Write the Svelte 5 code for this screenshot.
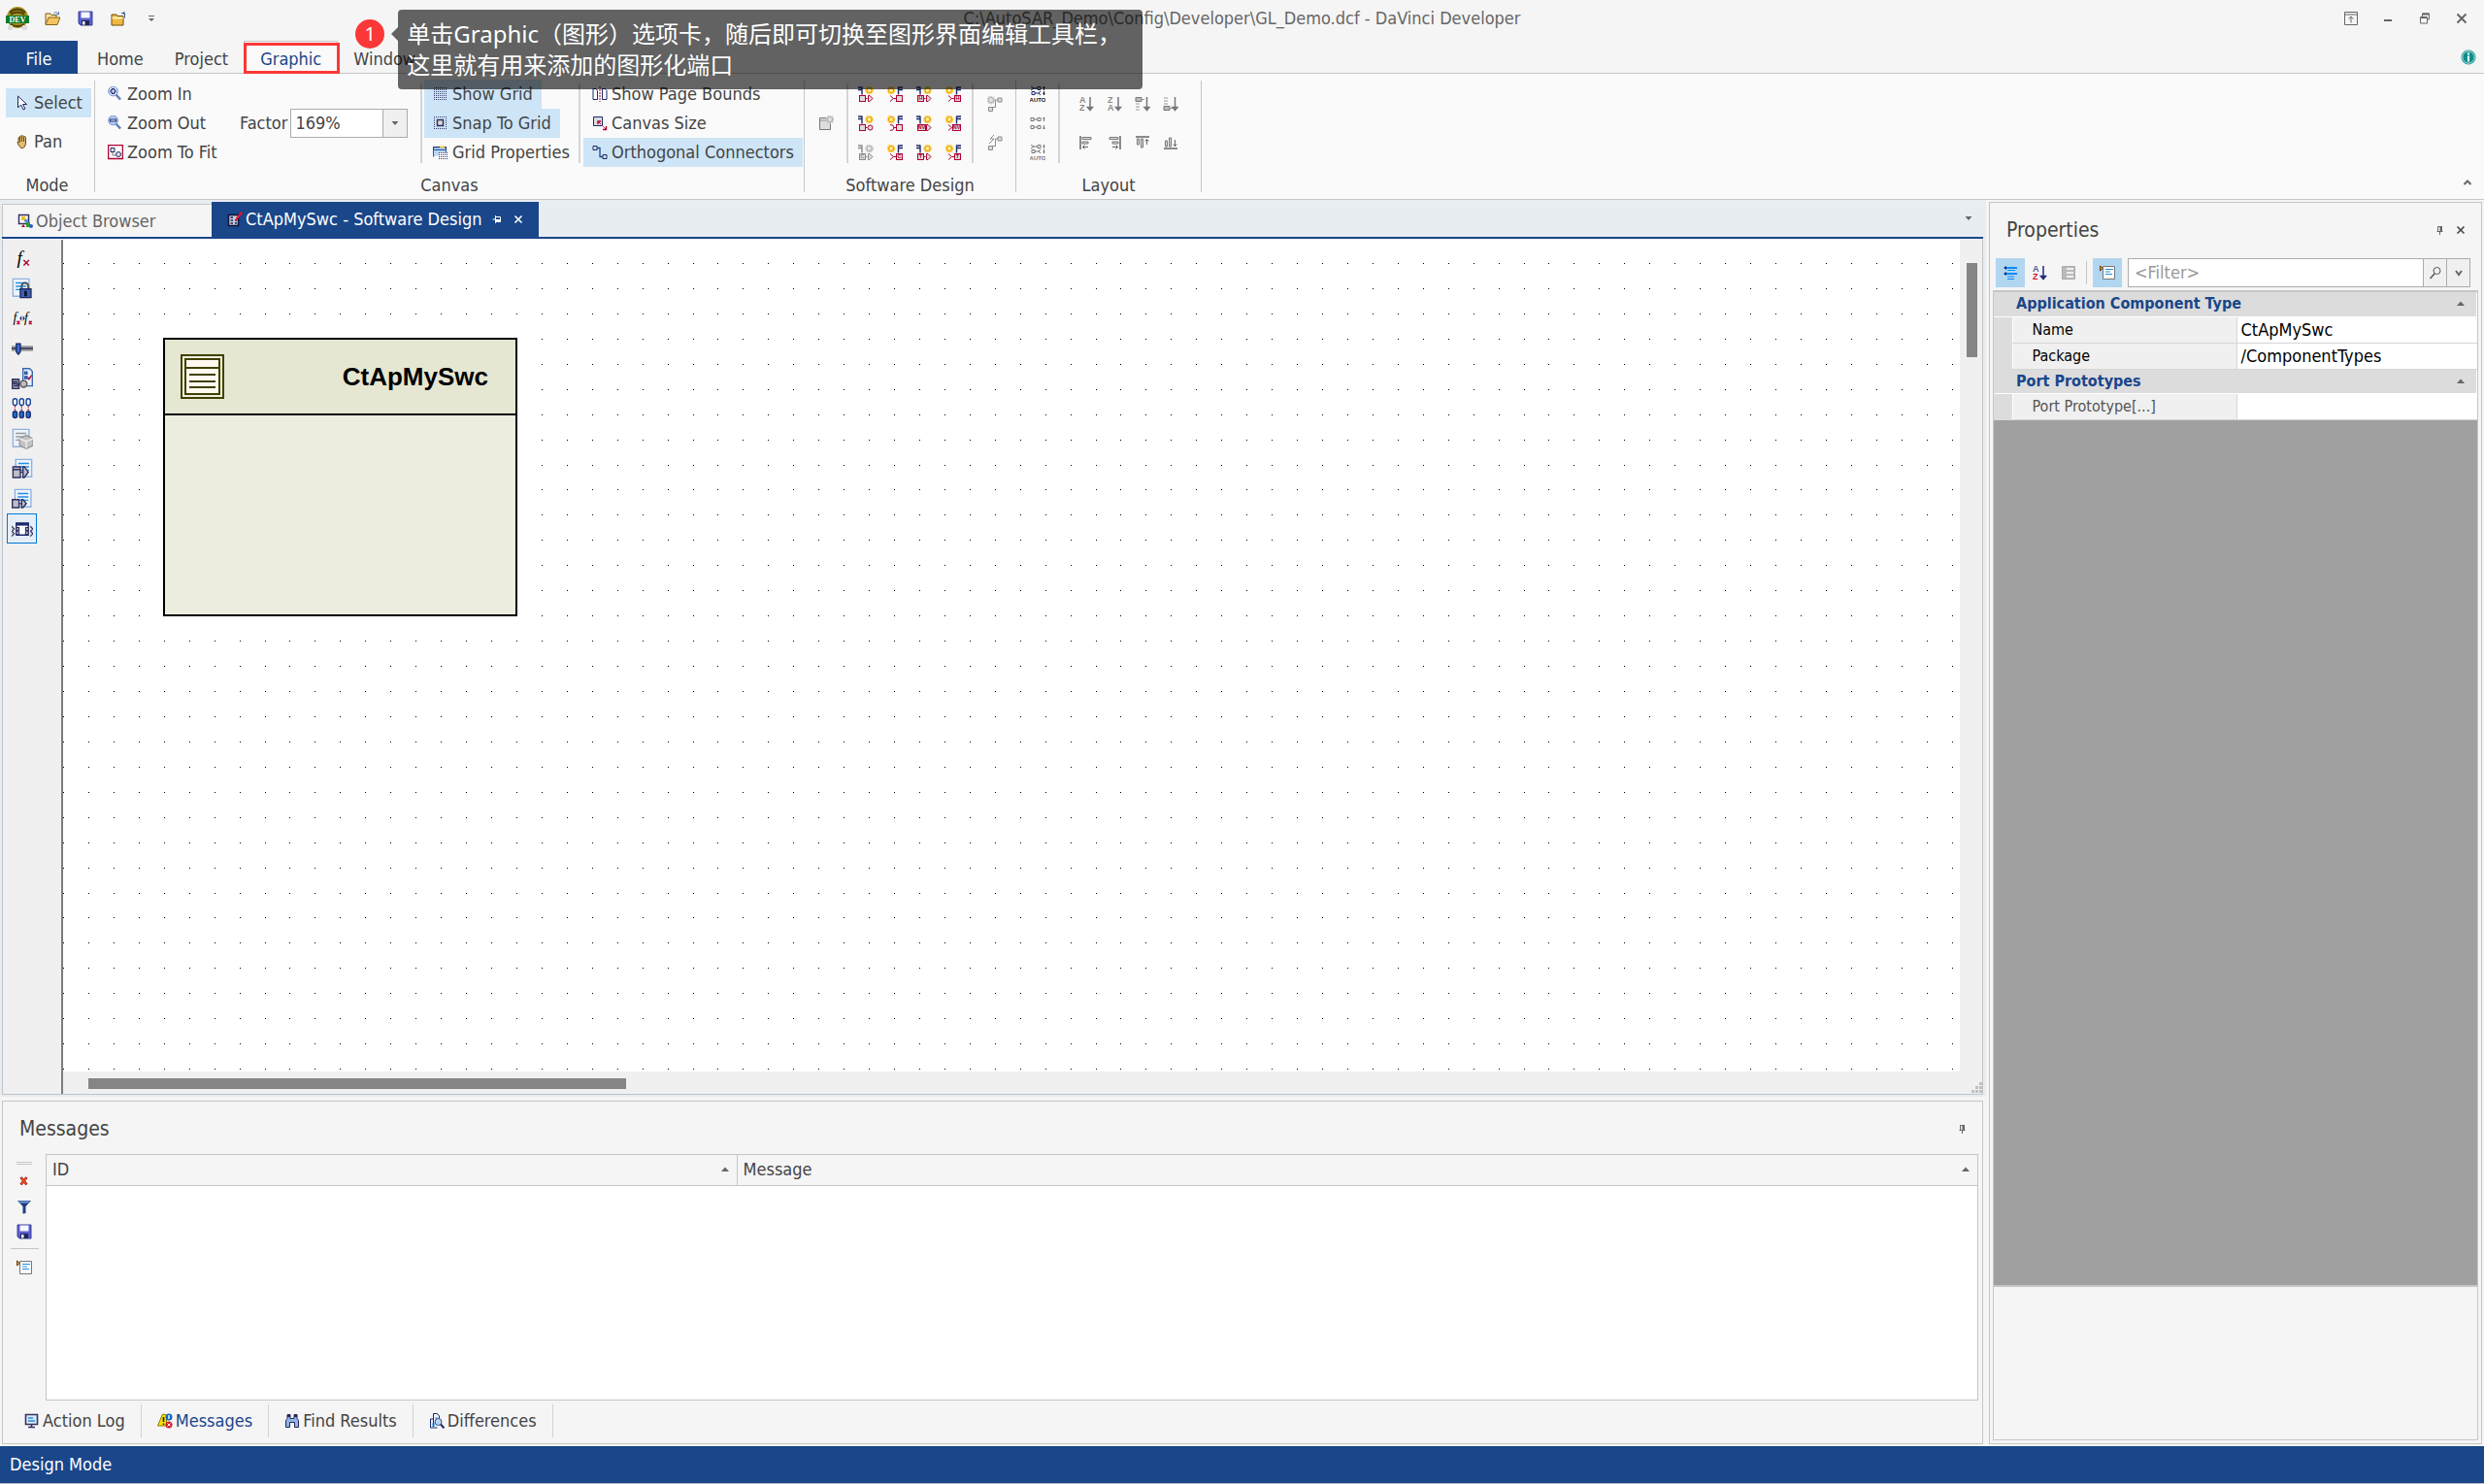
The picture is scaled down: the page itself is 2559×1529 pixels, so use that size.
<!--
  DaVinci Developer main window: ribbon, software design canvas,
  properties grid and message panel.
-->
<script lang="ts">
  const GRID = 25.94;
  const NAVY = '#1b2a6b';
  const RED = '#b0002f';
  const GREY = '#8a8a8a';

  let canvasWidth = $state(0);
  let canvasHeight = $state(0);
  let factor = $state('169%');
  let filter = $state('');

  // one path for all grid points, rounded so each one stays a crisp pixel
  const gridPath = $derived.by(() => {
    let d = '';
    for (let y = 24; y < canvasHeight; y += GRID) {
      for (let x = 0; x < canvasWidth; x += GRID) {
        d += `M${Math.round(x)} ${Math.round(y)}h1v1h-1z`;
      }
    }
    return d;
  });

  function sun(cx: number, cy: number, muted = false) {
    const [ring, fill, core] = muted
      ? ['#c4c4c4', '#b5b5b5', '#e6e6e6']
      : ['#ffd21f', '#f29a00', '#fff2a0'];
    return `<circle cx="${cx}" cy="${cy}" r="3.6" fill="none" stroke="${ring}" stroke-width="1.6" stroke-dasharray="1.6 .7"/>
      <circle cx="${cx}" cy="${cy}" r="2.5" fill="${core}" stroke="${fill}" stroke-width="1.2"/>`;
  }

  function letters(text: string, x: number, color: string) {
    return text
      ? `<text x="${x}" y="14.2" font-size="5.5" font-weight="700" text-anchor="middle" fill="${color}" font-family="Liberation Sans, sans-serif">${text}</text>`
      : '';
  }

  // provide port: flag left, box and arrow (or ball) below
  function provide(text = '', ball = false, muted = false) {
    const flag = muted ? GREY : NAVY;
    const line = muted ? GREY : RED;
    const wide = text === 'NV' ? 8 : 6;
    const head = ball
      ? `<circle cx="12.5" cy="12.5" r="2.5" fill="#ddd" stroke="${line}"/>`
      : `<path d="M10.5 9.5h1.5l3 3-3 3h-1.5z" fill="#ddd" stroke="${line}"/>`;
    return `<path d="M0 1h4M0 3.5h4M4 .5v8" stroke="${flag}" stroke-width="1.4" fill="none"/>
      ${sun(11.5, 4, muted)}
      <rect x="1.5" y="9.5" width="${wide}" height="6" fill="#ddd" stroke="${line}"/><path d="M${wide + 1.5} 12.5h2" stroke="${line}"/>
      ${head}${letters(text, 1.5 + wide / 2, line)}`;
  }

  // require port: sun left, open chevron into the box
  function require(text = '', round = false) {
    const wide = text === 'NV' ? 8 : 6;
    const left = 15.5 - wide;
    const mouth = round ? 'M3 9.5q4 0 4 3t-4 3' : 'M3 9.5l3.5 3-3.5 3';
    return `${sun(4, 4)}
      <path d="M16 1h-4.500M16 3.500h-4.500M11.500 .5v8" stroke="${NAVY}" stroke-width="1.4" fill="none"/>
      <path d="${mouth}M6.500 12.500h${left - 6.5}" stroke="${RED}" fill="none"/>
      <rect x="${left}" y="9.5" width="${wide}" height="6" fill="#ddd" stroke="${RED}"/>${letters(text, left + wide / 2, RED)}`;
  }

  function connect(color: string, auto: boolean, dark: boolean) {
    const link = (y: number) =>
      `<path d="M1 ${y - 1.5}h3v3h-3zM8 ${y - 1.5}h3v3h-3zM4 ${y}h4" fill="none" stroke="${color}"/>`;
    if (!auto) {
      return `${link(4)}${link(12)}<path d="M14.500 6V2M13 3.500l1.500-1.500 1.500 1.500M14.500 10v4M13 12.500l1.500 1.500 1.500-1.500" fill="none" stroke="${color}"/>`;
    }
    const top = dark ? '#111' : color;
    return `<path d="M1 0l3 2-3 2M4 2h4M8 .5h3v3H8zM2 5.500h3v3H2zM5 7h5M11 5l-2 2 2 2" fill="none" stroke="${color}"/>
      <path d="M14.500 4V0M13.500 1.500h2M14.500 5v4M13.500 7.500h2" fill="none" stroke="${top}"/>
      <text x="8" y="15.800" font-size="6" font-weight="700" text-anchor="middle" fill="${top}" font-family="Liberation Sans, sans-serif">AUTO</text>`;
  }

  const az = (a: string, b: string, ca: string, cb: string, arrow: string) =>
    `<g font-family="Liberation Sans, sans-serif" font-size="9" font-weight="700"><text x="1" y="7" fill="${ca}">${a}</text><text x="1" y="15" fill="${cb}">${b}</text></g>
     <path d="M12 1v13M9.500 11.500l2.500 3 2.500-3z" stroke="${arrow}" fill="${arrow}" stroke-width="1.5"/>`;

  const floppy = `<path d="M1 1h14v14H3l-2-2z" fill="#5a5fd0" stroke="#3a3f9c"/><path d="M3.500 1.500h9v6h-9z" fill="#f4f6ff"/><path d="M4 10h8v5H4z" fill="#23264f"/><path d="M5 11h2.500v3.500H5z" fill="#fff"/>`;
  const page = (x: number, w: number, line = '#1f8fe0') =>
    `<path d="M${x} 1h${w}v13h-${w}z" fill="#eef4fd" stroke="#8fb2e0"/><path d="M${x + 2} 4h${w - 4}M${x + 2} 6.500h${w - 4}M${x + 2} 9h${w - 4}" stroke="${line}"/>`;

  const icons: Record<string, string> = {
    open: `<path d="M1 14V3h5l1 1.500h5V7" fill="#fbe6a2" stroke="#7a5a1e"/><path d="M1 14.500L4 7h12l-3 7.500z" fill="#f3c45f" stroke="#8a6420"/><path d="M9 3q3-3 5 .5M14.500 1v3h-3" fill="none" stroke="#5b7fa8"/>`,
    save: floppy,
    project: `<path d="M1 15V4h5l1 1.500h6V15z" fill="#f0b93f" stroke="#6e4c12"/><path d="M1.500 7.500h11" stroke="#fff0b8" stroke-width="2"/><path d="M11 2.500h3.500v5M14.500 1l-2 1.500 2 1.500" fill="none" stroke="#3a5f8f"/>`,
    more: `<path d="M5 5.500h6" stroke="#666"/><path d="M5 8h6l-3 3z" fill="#666"/>`,
    pointer: `<path d="M3.500 1v12l3-3 2.500 5 2-1-2.500-4.500h4z" fill="#fff" stroke="#20265e"/>`,
    hand: `<path d="M4 9V4q1-1.500 1.500 0V2.500q1-1.500 2 0v-.5q1-1 2 .5q1.500-.5 2 1V10q-.5 4-3 4.500H7Q3.500 12.500 3 8z" fill="#e2bd78" stroke="#6b4a14"/><path d="M5.500 3.500v5M7.500 2.500v5.500M9.500 3v5" stroke="#6b4a14"/>`,
    zoomIn: `<path d="M8.500 8.500l4.500 5" stroke="#5d7fb5" stroke-width="2.500"/><circle cx="5.500" cy="5" r="4.800" fill="#dfe9fb" stroke="#6d8fd0"/><path d="M5.500 2v6M2.500 5h6" stroke="${NAVY}" stroke-width="3"/><path d="M5.500 3v4M3.500 5h4" stroke="#fff"/>`,
    zoomOut: `<path d="M8.500 8.500l4.500 5" stroke="#5d7fb5" stroke-width="2.500"/><circle cx="5.500" cy="5" r="4.800" fill="#b9ccf2" stroke="#6d8fd0"/><path d="M2 5h7" stroke="${NAVY}" stroke-width="3"/><path d="M3 5h5" stroke="#fff"/>`,
    zoomFit: `<path d="M.5.5h15v14H.5z" fill="#fff" stroke="${RED}" stroke-width="1.500"/><path d="M3 3.500h4v4H3z" fill="#ddd" stroke="${NAVY}"/><circle cx="11" cy="10" r="2.500" fill="#ddd" stroke="${NAVY}"/><path d="M5 8v3h3" stroke="#777" fill="none"/>`,
    grid: `<path d="M1 1.500h14M1 3.500h14M1 5.500h14M1 7.500h14M1 9.500h14M1 11.500h14M1 13.500h14" stroke="#3a3a68" stroke-dasharray="1 1"/>`,
    snap: `<path d="M1 1.500h14M1 3.500h14M1 5.500h14M1 7.500h14M1 9.500h14M1 11.500h14M1 13.500h14" stroke="#3a3a68" stroke-dasharray="1 1"/><path d="M3 3h9v9H3z" fill="#cde5f7"/><path d="M4.500 4.500h6v6h-6z" fill="#d8d8d8" stroke="#2b2b60" stroke-width="1.400"/>`,
    gridProps: `<path d="M.5 12V2.500h13v3" fill="#9cc4ee" stroke="${NAVY}"/><path d="M7 1.500h5v2H7z" fill="#f4c542"/><path d="M.5 12.500v-7h13v3" fill="#b8d8f5" stroke="#2a5aa8"/><path d="M6 8h10v7H6z" fill="#fff"/><path d="M6 8.500h10M6 10.500h10M6 12.500h10M6 14.500h10" stroke="#222a66" stroke-dasharray="1 1"/>`,
    pageBounds: `<path d="M1 2.500h3l1.500 2v9H1zM10.500 2.500h3l1.500 2v9h-4.500z" fill="#fff" stroke="${NAVY}"/><path d="M8 0v16" stroke="${RED}" stroke-dasharray="2 1"/>`,
    canvasSize: `<path d="M1.500 1.500h9v9h-9z" fill="#ddd" stroke="${NAVY}"/><path d="M6 6l8 8" stroke="${RED}" stroke-dasharray="4 2 2 1"/><path d="M6 9V6h3M14.500 11v3.500H11" fill="none" stroke="${RED}" stroke-width="1.400"/>`,
    ortho: `<path d="M1 1.500h4v4H1zM11 10.500h4v4h-4z" fill="#ddd" stroke="${NAVY}"/><path d="M5 3.500h3v9h3" fill="none" stroke="#1a468a" stroke-width="1.300"/>`,
    component: `<path d="M1.500 2.500h11v12h-11z" fill="#ddd" stroke="#777"/><path d="M2 5h9" stroke="#999"/>${sun(12, 4, true)}`,
    wire: `<path d="M1.500 11.500h4v4h-4zM11 2h4v4h-4z" fill="#ddd" stroke="${GREY}"/><path d="M5.500 11.500h3V4H11" fill="none" stroke="${GREY}"/>${sun(4, 4, true)}`,
    wireAuto: `<path d="M1.500 11.500h4v4h-4zM11 2h4v4h-4z" fill="#ddd" stroke="${GREY}"/><path d="M5.500 11.500h3V4H11M7 0L3 4h4L2 9" fill="none" stroke="${GREY}"/>`,
    linkBest: connect(NAVY, true, true),
    link: connect('#777', false, false),
    linkAll: connect('#777', true, false),
    sortAz: az('A', 'Z', '#888', '#888', '#777'),
    sortZa: az('Z', 'A', '#888', '#888', '#777'),
    sortTop: `<path d="M1 1.500h6v4H1z" fill="#bbb" stroke="#777"/><path d="M7 3.500h3M1 8h4M1 11h4M1 14h4" stroke="#999"/><path d="M12.500 1v13M10 11.500l2.500 3 2.500-3z" stroke="#777" fill="#777" stroke-width="1.500"/>`,
    sortBottom: `<path d="M1 10.500h6v4H1z" fill="#bbb" stroke="#777"/><path d="M7 12.500h3M1 2h4M1 5h4M1 8h4" stroke="#999"/><path d="M12.500 1v13M10 11.500l2.500 3 2.500-3z" stroke="#777" fill="#777" stroke-width="1.500"/>`,
    alignLeft: `<path d="M2 1v14" stroke="#666" stroke-width="1.500"/><path d="M4 2.500h9v2H4zM4 7h6v2H4z" fill="#ddd" stroke="#777"/><path d="M10 12.500H4.500M6.500 10.500l-2 2 2 2" fill="none" stroke="#666"/>`,
    alignRight: `<path d="M14 1v14" stroke="#666" stroke-width="1.500"/><path d="M3 2.500h9v2H3zM6 7h6v2H6z" fill="#ddd" stroke="#777"/><path d="M6 12.500h5.500M9.500 10.500l2 2-2 2" fill="none" stroke="#666"/>`,
    alignTop: `<path d="M1 2h14" stroke="#666" stroke-width="1.500"/><path d="M2.500 4h2v6h-2zM6.500 4h2v9h-2z" fill="#ddd" stroke="#777"/><path d="M12.500 10V4.500M10.500 6.500l2-2 2 2" fill="none" stroke="#666"/>`,
    alignBottom: `<path d="M1 14h14" stroke="#666" stroke-width="1.500"/><path d="M2.500 6h2v6h-2zM6.500 3h2v9h-2z" fill="#ddd" stroke="#777"/><path d="M12.500 5v6.500M10.500 9.500l2 2 2-2" fill="none" stroke="#666"/>`,
    info: `<circle cx="8" cy="8" r="7" fill="#0b8f8c" stroke="#0b8f8c"/><circle cx="8" cy="8" r="6.200" fill="none" stroke="#bfe5e3"/><path d="M8 3.500v2M8 6.500v6" stroke="#fff" stroke-width="2"/>`,
    fullUp: `<path d="M1.500 1.500h13v13h-13zM1.500 4h13M8 12.500V6M5.500 8.500L8 6l2.500 2.500" fill="none" stroke="#666"/>`,
    minimize: `<path d="M4 10h8" stroke="#666" stroke-width="2"/>`,
    restore: `<path d="M3.500 7h7v6h-7zM5.500 7V3h7v6h-2" fill="none" stroke="#666"/><path d="M3.500 7h7M5.500 3.500h7" stroke="#666" stroke-width="2"/>`,
    close: `<path d="M3.500 3.500l9 9M12.500 3.500l-9 9" stroke="#666" stroke-width="2"/>`,
    closeThin: `<path d="M4.500 4.500l7 7M11.500 4.500l-7 7" stroke="currentColor" stroke-width="1.600"/>`,
    chevronUp: `<path d="M4.500 10L8 6.500l3.500 3.500" fill="none" stroke="#666" stroke-width="2"/>`,
    chevronDown: `<path d="M5 6l3 4 3-4" fill="none" stroke="#666" stroke-width="2"/>`,
    caret: `<path d="M4.500 6h7L8 10z" fill="#666"/>`,
    sorted: `<path d="M4 10h8L8 5.500z" fill="#666"/>`,
    pin: `<path d="M5.500 4.500h4v5h-4zM4.500 9.500h6M7.500 10v3" fill="none" stroke="#666"/><path d="M7.500 4H10v5.500H7.500z" fill="#666"/>`,
    pinSide: `<path d="M6.500 5.500h5v5h-5zM6.500 4v8M3.500 8h3" fill="none" stroke="#fff"/><path d="M7 8h4.500v2.500H7z" fill="#fff"/>`,
    browser: `<path d="M1.500 1.500h10v9h-10z" fill="#fff" stroke="#33335e" stroke-width="1.500"/><path d="M4 3h4v4H4z" fill="#f0c020"/><circle cx="9" cy="7.500" r="2" fill="#5b8fe0"/><path d="M9 9h4v5H9z" fill="#2f9a3c"/><path d="M4 14l2-3 2 3z" fill="${RED}"/><circle cx="14" cy="13" r="2" fill="#2f5fc0"/>`,
    design: `<path d="M1.500 3.500h10v11h-10z" fill="#c8c8d8" stroke="#0b1238" stroke-width="1.500"/><path d="M3.500 6h2.500M3.500 9h2.500M3.500 12h2.500M8 9h2M8 12h2" stroke="#16205a" stroke-width="1.400"/><path d="M8 10l1-3 5-7 2 1.500-5.500 7z" fill="#e0152e"/>`,
    fx: `<text x="4" y="12" font-size="14" font-style="italic" fill="#000" font-family="Liberation Serif, serif">f</text><path d="M9 9.500l4 4M13 9.500l-4 4" stroke="${RED}"/>`,
    lockPage: `${page(1, 12)}<path d="M7.500 9V6.500a2.500 2.500 0 0 1 5 0V9" fill="none" stroke="#555" stroke-width="1.500"/><path d="M6.500 8.500h8v6.500h-8z" fill="#3d62a8" stroke="${NAVY}"/><path d="M10.500 10v4" stroke="#0a1234" stroke-width="2"/>`,
    fxfx: `<g font-family="Liberation Serif, serif" font-size="10" font-style="italic" fill="#000"><text x="1" y="11">f</text><text x="9.500" y="11">f</text></g><path d="M4 10l2 2.500M6 10l-2 2.500M13 10l2 2.500M15 10l-2 2.500" stroke="${RED}"/><path d="M7.500 6v4L6 8zM8.500 6v4L10 8z" fill="${NAVY}"/>`,
    slider: `<path d="M0 8h16" stroke="#999" stroke-width="4"/><path d="M0 8h16" stroke="#2b2b55"/><path d="M3.500 4.500h3v6L5 12.500l-1.500-2z" fill="#3a6fd0" stroke="${NAVY}"/>`,
    service: `<path d="M8.500.5h5l2 2v11h-7z" fill="#e8f0fc" stroke="#3b66b0"/><path d="M10 3h1.500v1.500H10zM10 6.500h1.500V8H10z" stroke="#1f4f9f" fill="none"/><path d="M12 7l1 1.500 2-3" fill="none" stroke="${RED}"/><path d="M.5 8.500h5v7h-5z" fill="#aaa" stroke="#2f2f60"/><path d="M5.500 12h2M4.500 10.500h-3V12h3v1.500h-3" fill="none" stroke="#2f2f60"/><circle cx="9" cy="12" r="2.500" fill="#bbb" stroke="#555"/>`,
    mapping: [2.5, 7.5, 12.5].map((x) => `<rect x="${x - 1.5}" y="0.500" width="3" height="5" rx="1.500" fill="#fff" stroke="#0f3f9a"/><path d="M${x} 6v4" stroke="${RED}" stroke-dasharray="1 1"/><rect x="${x - 1.5}" y="10" width="3" height="5" rx="1.500" fill="#1f6fd0" stroke="${NAVY}"/>`).join(''),
    cube: `${page(1, 12, '#999')}<path d="M6 8l5-2.500L16 8v5l-5 2.500L6 13z" fill="#c4c4c4" stroke="#999"/><path d="M6 8l5 2 5-2M11 10v5" fill="none" stroke="#eee"/>`,
    dataOut: `${page(3, 12)}<path d="M1 6.500h5.500v8H1z" fill="#bdbdc6" stroke="#2f2f60"/><path d="M1 8.500h5.500M6.500 10.500H9M8.500 6.500h1l3 4-3 4h-1z" fill="#bdbdc6" stroke="#2f2f60"/>`,
    dataIn: `${page(2.5, 12)}<path d="M.5 8.500h5v6h-5zM5.500 11.500H7M7.500 8.500H8.500l2.500 3-2.500 3H7.500z" fill="#bdbdc6" stroke="#2f2f60"/>`,
    portView: `<path d="M3.500 3.500h9v9h-9z" fill="#fff" stroke="${NAVY}"/><path d="M3 4.500h10" stroke="${NAVY}" stroke-width="2"/><path d="M3.500 7h2v2h-2zM3.500 10h2v2h-2zM10.500 7h2v2h-2zM10.500 10h2v2h-2zM0 6l2 2-2 2M0 9.500l2 2-2 2M14 6l2 2-2 2M14 9.500l2 2-2 2" fill="#ccc" stroke="#2f2f60" stroke-width=".8"/>`,
    clear: `<path d="M4.500 4l6 7.500M10.500 4l-6 7.500" stroke="#a02410" stroke-width="2.800"/><path d="M5 4.500l5 6.500M10 4.500L5 11" stroke="#ff5a28" stroke-width="1.200"/>`,
    funnel: `<path d="M1 2h14L9.500 8v7l-3 .500V8z" fill="#1f3f80"/><path d="M2 2.500h12l-2 2H4z" fill="#6f9ad0"/>`,
    note: `<path d="M3.500 1.500h12v13h-12z" fill="#fff" stroke="#777"/><path d="M6 4.500h8M6 7h5M6 9.500h7" stroke="#1f8fe0"/><path d="M.5 1l3 2.500-3 2.500z" fill="#e8a040" stroke="#6b4210"/>`,
    category: `<path d="M3 3h12M3 9h12" stroke="#0a8cff" stroke-width="2"/><path d="M5 5.500h8M5 12h7M5 14.500h7" stroke="#0a8cff"/><path d="M4 1v4L1 3zM4 7v4L1 9z" fill="#0a2b6b"/>`,
    sortProps: az('A', 'Z', '#55588f', '#d0152e', '#1f2a7a'),
    list: `<path d="M1.500 1.500h13v13h-13z" fill="#bbb" stroke="#aaa"/><path d="M6 4h7M6 8h7M6 12h7" stroke="#eee" stroke-width="2"/>`,
    search: `<circle cx="9.500" cy="6" r="3.500" fill="none" stroke="#555"/><path d="M7 9l-4.500 5" stroke="#555" stroke-width="1.500"/>`,
    monitor: `<path d="M1.500 1.500h12v10h-12z" fill="#dce8fa" stroke="#33335e" stroke-width="1.600"/><path d="M4 5h5M4 8h7" stroke="#1f8fe0" stroke-width="1.400"/><path d="M7.500 12v2M4 14.500h7" stroke="#33335e" stroke-width="1.600"/>`,
    alerts: `<path d="M5.500 1L.5 13h9V2z" fill="#ffe000" stroke="#8a7a00"/><path d="M6.500 4v5M6.500 10.500v1.500" stroke="#222" stroke-width="1.600"/><circle cx="12" cy="4" r="3.500" fill="#1468c0"/><path d="M12 2v4" stroke="#fff" stroke-width="1.400"/><circle cx="12" cy="12" r="3.500" fill="#d0202c"/><path d="M10.500 10.500l3 3M13.500 10.500l-3 3" stroke="#fff"/>`,
    binoculars: `<path d="M3 1.500h3v4h4v-4h3v4l1.500 2v7h-4v-5h-5v5h-4v-7L3 5.500z" fill="#8fb4ea" stroke="#25255a"/><path d="M3 3h3M10 3h3" stroke="#25255a" stroke-width="2"/>`,
    differences: `<path d="M4.500 14V.5h4l2 2.500v4M1.500 6h3M1.500 6v9h7" fill="#eef3fc" stroke="${NAVY}"/><path d="M3 11h3M3 13h3M6 5h3" stroke="#1f8fe0"/><circle cx="9.500" cy="9" r="3.500" fill="#bcd4f4" stroke="#33508f"/><path d="M12 11.500l3.500 4" stroke="${NAVY}" stroke-width="2"/>`,
    provide1: provide(),
    require1: require(),
    provideH: provide('H'),
    requireH: require('H'),
    provideBall: provide('', true),
    requireRound: require('', true),
    provideNv: provide('NV'),
    requireNv: require('NV'),
    provideC: provide('C', false, true),
    requireC: require('C'),
    provideT: provide('T'),
    requireT: require('T')
  };

  const portRows = [
    ['provide1', 'require1', 'provideH', 'requireH'],
    ['provideBall', 'requireRound', 'provideNv', 'requireNv'],
    ['provideC', 'requireC', 'provideT', 'requireT']
  ];
  const layoutRows = [
    ['sortAz', 'sortZa', 'sortTop', 'sortBottom'],
    ['alignLeft', 'alignRight', 'alignTop', 'alignBottom']
  ];
  const sideTools = ['fx', 'lockPage', 'fxfx', 'slider', 'service', 'mapping', 'cube', 'dataOut', 'dataIn', 'portView'];
  const bottomTabs = [
    { icon: 'monitor', label: 'Action Log' },
    { icon: 'alerts', label: 'Messages' },
    { icon: 'binoculars', label: 'Find Results' },
    { icon: 'differences', label: 'Differences' }
  ];
  const categories = [
    { title: 'Application Component Type', rows: [['Name', 'CtApMySwc'], ['Package', '/ComponentTypes']] },
    { title: 'Port Prototypes', rows: [['Port Prototype[...]', '']] }
  ];
</script>

{#snippet icon(name: string)}
  <svg class="icon" viewBox="0 0 16 16" fill="none" aria-hidden="true">{@html icons[name]}</svg>
{/snippet}

{#snippet command(name: string, label: string, on = false)}
  <button class="command" class:on>{@render icon(name)}{label}</button>
{/snippet}

{#snippet tool(name: string, on = false)}
  <button class="tool" class:on aria-label={name}>{@render icon(name)}</button>
{/snippet}

<div class="app">
  <header class="titlebar">
    <div class="quick">
      <svg class="logo" viewBox="0 0 24 24" aria-hidden="true">
        <circle cx="12" cy="11" r="11" fill="#a8901c" />
        <path d="M4 6q8-7 16 0M5 8q7-5 14 0M5 18q7 4 14 0" fill="none" stroke="#4b4008" stroke-width="2" />
        <path d="M2 19h5v5H2zM17 19h5v5h-5z" fill="#ddd" />
        <path d="M0 9h24v8H0z" fill="#0c7a2a" />
        <text x="12" y="16" text-anchor="middle" font-size="8" font-weight="700" font-family="Liberation Serif, serif" fill="#fff">DEV</text>
      </svg>
      <button aria-label="Open">{@render icon('open')}</button>
      <button aria-label="Save">{@render icon('save')}</button>
      <button aria-label="Close project">{@render icon('project')}</button>
      <button aria-label="Customize">{@render icon('more')}</button>
    </div>
    <h1>C:\AutoSAR_Demo\Config\Developer\GL_Demo.dcf - DaVinci Developer</h1>
    <div class="window-buttons">
      <button aria-label="Full screen">{@render icon('fullUp')}</button>
      <button aria-label="Minimize">{@render icon('minimize')}</button>
      <button aria-label="Restore">{@render icon('restore')}</button>
      <button aria-label="Close">{@render icon('close')}</button>
    </div>
  </header>

  <nav class="ribbon-tabs">
    <button class="file">File</button>
    <button>Home</button>
    <button>Project</button>
    <button class="active">Graphic<span class="highlight"></span></button>
    <button class="last">
      Window
      <span class="callout">
        <span class="step">1</span>
        <span class="tip">单击Graphic（图形）选项卡，随后即可切换至图形界面编辑工具栏，<br />这里就有用来添加的图形化端口</span>
      </span>
    </button>
    <button class="about" aria-label="About">{@render icon('info')}</button>
  </nav>

  <section class="ribbon">
    <div class="group">
      <div class="content mode">
        {@render command('pointer', 'Select', true)}
        {@render command('hand', 'Pan')}
      </div>
      <span class="caption">Mode</span>
    </div>
    <div class="group">
      <div class="content canvas-tools">
        <div class="stack">
          {@render command('zoomIn', 'Zoom In')}
          {@render command('zoomOut', 'Zoom Out')}
          {@render command('zoomFit', 'Zoom To Fit')}
        </div>
        <label class="factor">
          Factor
          <span class="combo">
            <select bind:value={factor}>
              <option>100%</option>
              <option>169%</option>
              <option>200%</option>
            </select>
            <span class="combo-arrow">{@render icon('caret')}</span>
          </span>
        </label>
        <i class="bar"></i>
        <div class="stack grid-tools">
          {@render command('grid', 'Show Grid', true)}
          {@render command('snap', 'Snap To Grid', true)}
          {@render command('gridProps', 'Grid Properties')}
        </div>
        <i class="bar"></i>
        <div class="stack page-tools">
          {@render command('pageBounds', 'Show Page Bounds')}
          {@render command('canvasSize', 'Canvas Size')}
          {@render command('ortho', 'Orthogonal Connectors', true)}
        </div>
      </div>
      <span class="caption">Canvas</span>
    </div>
    <div class="group">
      <div class="content design-tools">
        <div class="single">{@render tool('component')}</div>
        <i class="bar"></i>
        <div class="ports">
          {#each portRows.flat() as name}
            {@render tool(name)}
          {/each}
        </div>
        <i class="bar"></i>
        <div class="pair">
          {@render tool('wire')}
          {@render tool('wireAuto')}
        </div>
      </div>
      <span class="caption">Software Design</span>
    </div>
    <div class="group">
      <div class="content layout-tools">
        <div class="links">
          {@render tool('linkBest')}
          {@render tool('link')}
          {@render tool('linkAll')}
        </div>
        <i class="bar"></i>
        <div class="arrange">
          {#each layoutRows.flat() as name}
            {@render tool(name)}
          {/each}
        </div>
      </div>
      <span class="caption">Layout</span>
    </div>
    <button class="collapse" aria-label="Collapse ribbon">{@render icon('chevronUp')}</button>
  </section>

  <main>
    <div class="left">
      <section class="documents">
        <div class="doc-tabs">
          <button class="doc">{@render icon('browser')}Object Browser</button>
          <button class="doc current">
            {@render icon('design')}CtApMySwc - Software Design
            <span class="tab-marks">{@render icon('pinSide')}{@render icon('closeThin')}</span>
          </button>
          <button class="tool tab-menu" aria-label="Open documents">{@render icon('caret')}</button>
        </div>
        <div class="editor">
          <div class="side-tools">
            {#each sideTools as name}
              <button class:on={name === 'portView'} aria-label={name}>{@render icon(name)}</button>
            {/each}
          </div>
          <div class="surface" bind:clientWidth={canvasWidth} bind:clientHeight={canvasHeight}>
            <svg class="dots" aria-hidden="true"><path d={gridPath} /></svg>
            <article class="node">
              <header>
                <svg viewBox="0 0 45 46" aria-hidden="true">
                  <path d="M1 1h43v44H1z" fill="#f0efe0" stroke="#404000" stroke-width="2" />
                  <path d="M5 5h35v36H5zM5 14h35" fill="#fff8f0" stroke="#404000" stroke-width="2" />
                  <path d="M9 21h27M9 28h27M9 34h27" stroke="#404000" stroke-width="2" />
                </svg>
                <h2>CtApMySwc</h2>
              </header>
            </article>
          </div>
          <div class="scroll-y"><i></i></div>
          <div class="scroll-x"><i></i></div>
          <div class="corner">
            <svg viewBox="0 0 12 12" aria-hidden="true"><path d="M9 0h3v3H9zM5 4h3v3H5zM9 4h3v3H9zM1 8h3v3H1zM5 8h3v3H5zM9 8h3v3H9z" fill="#bfbfbf" /></svg>
          </div>
        </div>
      </section>

      <section class="panel messages">
        <div class="panel-title">
          <h2>Messages</h2>
          <button class="tool" aria-label="Pin messages">{@render icon('pin')}</button>
        </div>
        <div class="log">
          <div class="log-tools">
            <i class="grip"></i>
            {@render tool('clear')}
            {@render tool('funnel')}
            {@render tool('save')}
            <i class="rule"></i>
            {@render tool('note')}
          </div>
          <div class="log-table">
            <table>
              <thead>
                <tr>
                  <th class="id"><span>ID{@render icon('sorted')}</span></th>
                  <th><span>Message{@render icon('sorted')}</span></th>
                </tr>
              </thead>
              <tbody></tbody>
            </table>
          </div>
        </div>
        <div class="bottom-tabs">
          {#each bottomTabs as tab}
            <button class:current={tab.label === 'Messages'}>{@render icon(tab.icon)}{tab.label}</button>
          {/each}
        </div>
      </section>
    </div>

    <aside class="panel properties">
      <div class="panel-title">
        <h2>Properties</h2>
        <button class="tool" aria-label="Pin properties">{@render icon('pin')}</button>
        <button class="tool" aria-label="Close properties">{@render icon('closeThin')}</button>
      </div>
      <div class="prop-tools">
        {@render tool('category', true)}
        {@render tool('sortProps')}
        {@render tool('list')}
        <i class="rule"></i>
        {@render tool('note', true)}
        <div class="filter">
          <input type="text" placeholder="<Filter>" aria-label="Filter" bind:value={filter} />
          <button aria-label="Search">{@render icon('search')}</button>
          <button aria-label="Filter history">{@render icon('chevronDown')}</button>
        </div>
      </div>
      <div class="prop-grid">
        <table>
          <colgroup>
            <col class="col-gutter" />
            <col class="col-name" />
            <col />
          </colgroup>
          <tbody>
            {#each categories as category}
              <tr class="category">
                <th colspan="3"><span>{category.title}{@render icon('sorted')}</span></th>
              </tr>
              {#each category.rows as [name, value]}
                <tr class:empty={!value}>
                  <td class="gutter"></td>
                  <th>{name}</th>
                  <td>{value}</td>
                </tr>
              {/each}
            {/each}
          </tbody>
        </table>
      </div>
      <div class="description"></div>
    </aside>
  </main>

  <footer>Design Mode</footer>
</div>

<style>
  :global(body) {
    background: #f5f5f5;
  }
  .app {
    --blue: #1a468a;
    --line: #c6c6c6;
    --on: #cde5f7;
    display: flex;
    flex-direction: column;
    min-height: 100vh;
    color: #444;
    font: 18px/24px 'DejaVu Sans Condensed', 'Noto Sans', sans-serif;
    overflow: hidden;
  }
  .app * {
    box-sizing: border-box;
  }
  button {
    display: flex;
    align-items: center;
    justify-content: center;
    padding: 0;
    border: none;
    background: none;
    color: inherit;
    font: inherit;
    white-space: nowrap;
  }
  h1,
  h2 {
    margin: 0;
    font-weight: 400;
  }
  .icon {
    display: block;
    flex: none;
    width: 16px;
    height: 16px;
  }

  /* title bar */
  .titlebar {
    display: grid;
    grid-template-columns: 1fr auto 1fr;
    align-items: center;
    height: 38px;
    margin-bottom: 4px;
  }
  .titlebar h1 {
    font-size: 18px;
    color: #666;
  }
  .quick {
    display: flex;
    align-items: center;
    gap: 18px;
    padding-left: 6px;
  }
  .quick .logo {
    width: 24px;
    height: 24px;
    margin-right: -2px;
  }
  .window-buttons {
    display: flex;
    justify-content: flex-end;
    gap: 22px;
    padding-right: 15px;
  }

  /* ribbon tabs */
  .ribbon-tabs {
    display: flex;
    height: 34px;
    border-bottom: 1px solid var(--line);
  }
  .ribbon-tabs button {
    position: relative;
    height: 34px;
    padding: 3px 16px 0;
  }
  .ribbon-tabs .file {
    width: 80px;
    margin-right: 4px;
    background: var(--blue);
    color: #fff;
  }
  .ribbon-tabs .active {
    border: 1px solid var(--line);
    border-bottom: none;
    padding: 2px 16px 0;
    background: #fafafa;
    color: var(--blue);
  }
  .highlight {
    position: absolute;
    inset: 1px -3px 0 -1px;
    border: 3px solid #fc3737;
  }
  .ribbon-tabs .about {
    margin-left: auto;
    padding: 0 8px;
  }
  .callout {
    position: absolute;
    left: 18px;
    top: -32px;
    z-index: 2;
    display: flex;
    align-items: flex-start;
    gap: 14px;
    text-align: left;
  }
  .step {
    width: 30px;
    height: 30px;
    margin-top: 10px;
    border-radius: 50%;
    background: #fc3737;
    color: #fff;
    font: 20px/30px 'Noto Sans', sans-serif;
    text-align: center;
  }
  .tip {
    position: relative;
    padding: 9px 22px 9px 9px;
    border-radius: 4px;
    background: rgb(0 0 0 / 60%);
    color: #fff;
    font: 24px/32px 'Noto Sans', 'Noto Sans CJK SC', sans-serif;
  }
  .tip::before {
    content: '';
    position: absolute;
    right: 100%;
    top: 18px;
    border: 7px solid transparent;
    border-left-width: 0;
    border-right-color: rgb(0 0 0 / 60%);
  }

  /* ribbon */
  .ribbon {
    display: flex;
    height: 130px;
    border-bottom: 1px solid var(--line);
    background: #fafafa;
  }
  .group {
    display: flex;
    flex-direction: column;
    align-items: center;
    margin: 7px 0;
    border-right: 1px solid var(--line);
  }
  .content {
    display: flex;
    flex: none;
    height: 90px;
    margin-top: -1px;
  }
  .caption {
    margin-top: 7px;
  }
  .command {
    height: 30px;
    gap: 4px;
    padding: 0 9px;
  }
  .command.on {
    background: var(--on);
  }
  .stack {
    display: flex;
    flex-direction: column;
    align-items: flex-start;
  }
  .bar {
    width: 2px;
    height: 82px;
    margin-top: 4px;
    background: #d5d5d5;
  }
  .tool {
    width: 30px;
    height: 30px;
  }
  .mode {
    flex-direction: column;
    align-items: flex-start;
    gap: 10px;
    width: 97px;
    padding: 9px 6px 0;
  }
  .canvas-tools {
    padding-left: 4px;
  }
  .canvas-tools .stack:first-child {
    width: 145px;
  }
  .factor {
    display: flex;
    align-items: center;
    gap: 3px;
    width: 186px;
  }
  .combo {
    display: grid;
    grid-template-columns: 1fr 25px;
    width: 121px;
    height: 30px;
    border: 1px solid #ababab;
    background: #fff;
  }
  select {
    grid-area: 1 / 1 / 2 / 3;
    appearance: none;
    padding: 0 4px;
    border: none;
    background: none;
    color: inherit;
    font: inherit;
  }
  .combo-arrow {
    display: flex;
    grid-area: 1 / 2;
    align-items: center;
    justify-content: center;
    border-left: 1px solid #ababab;
    background: #f0f0f0;
    pointer-events: none;
  }
  .grid-tools {
    width: 161px;
    padding-left: 2px;
  }
  .page-tools {
    width: 230px;
    padding-left: 3px;
  }
  .single,
  .pair,
  .links {
    display: flex;
    flex-direction: column;
    justify-content: center;
    align-items: center;
    width: 43px;
  }
  .pair {
    gap: 10px;
  }
  .ports {
    display: grid;
    grid-template-columns: repeat(4, 30px);
    width: 127px;
    padding-left: 3px;
  }
  .arrange {
    display: grid;
    grid-template-columns: repeat(4, 29px);
    align-content: center;
    row-gap: 10px;
    width: 145px;
    padding-left: 12px;
  }
  .collapse {
    align-self: flex-end;
    margin: 0 9px 9px auto;
  }

  /* documents */
  main {
    display: grid;
    flex: 1;
    grid-template-columns: minmax(0, 1fr) 508px;
    gap: 3px;
    padding: 0 2px 2px 0;
  }
  .left {
    display: flex;
    flex-direction: column;
    gap: 4px;
  }
  .documents {
    display: flex;
    flex: 1;
    flex-direction: column;
    padding: 2px 3px 2px 2px;
    background: #e8edf2;
  }
  .doc-tabs {
    display: flex;
    align-items: flex-end;
    height: 38px;
    border-bottom: 2px solid var(--blue);
  }
  .doc {
    justify-content: flex-start;
    gap: 3px;
    width: 216px;
    height: 34px;
    padding-left: 15px;
    border: 1px solid var(--line);
    border-width: 1px 0 0 1px;
    background: #f5f5f5;
    color: #666;
  }
  .doc.current {
    width: 337px;
    height: 36px;
    padding-left: 16px;
    border: none;
    background: var(--blue);
    color: #fff;
  }
  .tab-marks {
    display: flex;
    gap: 6px;
    margin: 0 13px 0 auto;
  }
  .tab-menu {
    margin: 0 0 4px auto;
  }
  .editor {
    display: grid;
    flex: 1;
    grid-template: 1fr 23px / 62px 1fr 23px;
    border: 1px solid #bfc3c8;
    border-top-color: #fff;
    background: #f0f0f0;
  }
  .side-tools {
    display: flex;
    flex-direction: column;
    grid-row: 1 / 3;
    padding: 3px 4px;
    border-right: 2px solid #7d7d7d;
  }
  .side-tools button {
    width: 31px;
    height: 31px;
  }
  .side-tools .icon {
    width: 22px;
    height: 22px;
  }
  .side-tools .on {
    border: 1px solid #0078d7;
    background: #e5eef7;
  }
  .surface {
    position: relative;
    overflow: hidden;
    background: #fff;
  }
  .dots {
    position: absolute;
    width: 100%;
    height: 100%;
  }
  .node {
    position: absolute;
    left: 103px;
    top: 101px;
    width: 365px;
    height: 287px;
    border: 2px solid #000;
    background: #edede0;
  }
  .node header {
    display: flex;
    align-items: center;
    justify-content: space-between;
    height: 78px;
    padding: 0 28px 0 16px;
    border-bottom: 2px solid #000;
    background: #e5e7d2;
  }
  .node svg {
    width: 45px;
    height: 46px;
  }
  .node h2 {
    color: #000;
    font: 700 26px/32px 'Liberation Sans', sans-serif;
  }
  .scroll-y {
    padding: 24px 5px 0 7px;
  }
  .scroll-y i {
    display: block;
    height: 97px;
    background: #858585;
  }
  .scroll-x {
    padding: 7px 0 0 26px;
  }
  .scroll-x i {
    display: block;
    width: 554px;
    height: 11px;
    background: #858585;
  }
  .corner {
    display: flex;
    align-items: flex-end;
    justify-content: flex-end;
  }
  .corner svg {
    width: 12px;
    height: 12px;
  }

  /* panels */
  .panel {
    display: flex;
    flex-direction: column;
    border: 1px solid var(--line);
    background: #f5f5f5;
  }
  .panel-title {
    display: flex;
    align-items: center;
    height: 54px;
    padding: 2px 10px 0 17px;
  }
  .panel-title h2 {
    margin-right: auto;
    font-size: 21px;
  }
  .panel-title .tool {
    width: 21px;
  }
  .messages {
    margin: 0 3px 0 2px;
  }
  .log {
    display: flex;
    height: 254px;
    padding-right: 4px;
  }
  .log-tools {
    display: flex;
    flex-direction: column;
    align-items: center;
    width: 44px;
    padding: 8px 0;
  }
  .log-tools .tool {
    height: 26px;
  }
  .grip {
    width: 16px;
    height: 3px;
    margin-bottom: 4px;
    border: 1px solid var(--line);
    border-width: 1px 0;
  }
  .log-tools .rule {
    width: 29px;
    height: 1px;
    margin: 4px 0 6px;
    background: var(--line);
  }
  .log-table {
    flex: 1;
    border: 1px solid var(--line);
    background: #fff;
  }
  table {
    width: 100%;
    border-collapse: collapse;
    table-layout: fixed;
  }
  th {
    padding: 0;
    font-weight: 400;
    text-align: left;
  }
  th span {
    display: flex;
    align-items: center;
    justify-content: space-between;
  }
  .log-table th {
    height: 31px;
    padding: 0 4px 0 6px;
    border-bottom: 1px solid var(--line);
    background: #f5f5f5;
  }
  .log-table .id {
    width: 711px;
    border-right: 1px solid var(--line);
  }
  .bottom-tabs {
    display: flex;
    padding: 4px 0 6px 6px;
  }
  .bottom-tabs button {
    gap: 3px;
    height: 34px;
    padding: 0 16px;
    border-right: 1px solid #d2d2d2;
  }
  .bottom-tabs .current {
    color: var(--blue);
  }

  /* properties */
  .properties {
    margin-top: 2px;
    padding: 0 3px 3px;
  }
  .properties .panel-title {
    height: 57px;
    padding: 0 8px 2px 14px;
  }
  .prop-tools {
    display: flex;
    height: 33px;
    padding-left: 3px;
  }
  .prop-tools .tool.on {
    background: #b1d6f0;
  }
  .prop-tools .rule {
    width: 1px;
    height: 24px;
    margin: 3px 6px 0 3px;
    background: var(--line);
  }
  .filter {
    display: flex;
    flex: 1;
    height: 30px;
    margin: 0 8px 0 6px;
    border: 1px solid #ababab;
    background: #fff;
  }
  input {
    flex: 1;
    min-width: 0;
    padding: 0 6px;
    border: none;
    background: none;
    font: inherit;
  }
  input::placeholder {
    color: #999;
  }
  .filter button {
    width: 24px;
    border-left: 1px solid #ababab;
    background: #f0f0f0;
  }
  .prop-grid {
    flex: 1;
    border: 1px solid var(--line);
    border-width: 2px 1px;
    background: #a0a0a0;
  }
  .prop-grid table {
    border-bottom: 1px solid var(--line);
    background: #fff;
    color: #000;
  }
  .col-gutter {
    width: 19px;
  }
  .col-name {
    width: 231px;
  }
  .prop-grid th,
  .prop-grid td {
    height: 27px;
    padding: 0 0 0 4px;
    border-bottom: 1px solid #d5d5d5;
    line-height: 20px;
  }
  .prop-grid td.gutter {
    padding: 0;
    border-right: 1px solid #fff;
    border-bottom-color: #dcdcdc;
    background: #dcdcdc;
  }
  .prop-grid th {
    padding-left: 20px;
    border-right: 1px solid #d5d5d5;
    background: #f0f0f0;
    font-size: 16px;
  }
  .prop-grid .empty th {
    color: #555;
  }
  .prop-grid .category th {
    height: 25px;
    padding: 0 8px 0 23px;
    border-color: #fff;
    background: #dcdcdc;
    color: var(--blue);
    font-weight: 700;
  }
  .description {
    height: 158px;
    border: 1px solid var(--line);
    border-top: none;
  }

  footer {
    height: 39px;
    padding: 7px 10px;
    border-bottom: 1px solid #b9bcc0;
    background: var(--blue);
    color: #fff;
  }
</style>
